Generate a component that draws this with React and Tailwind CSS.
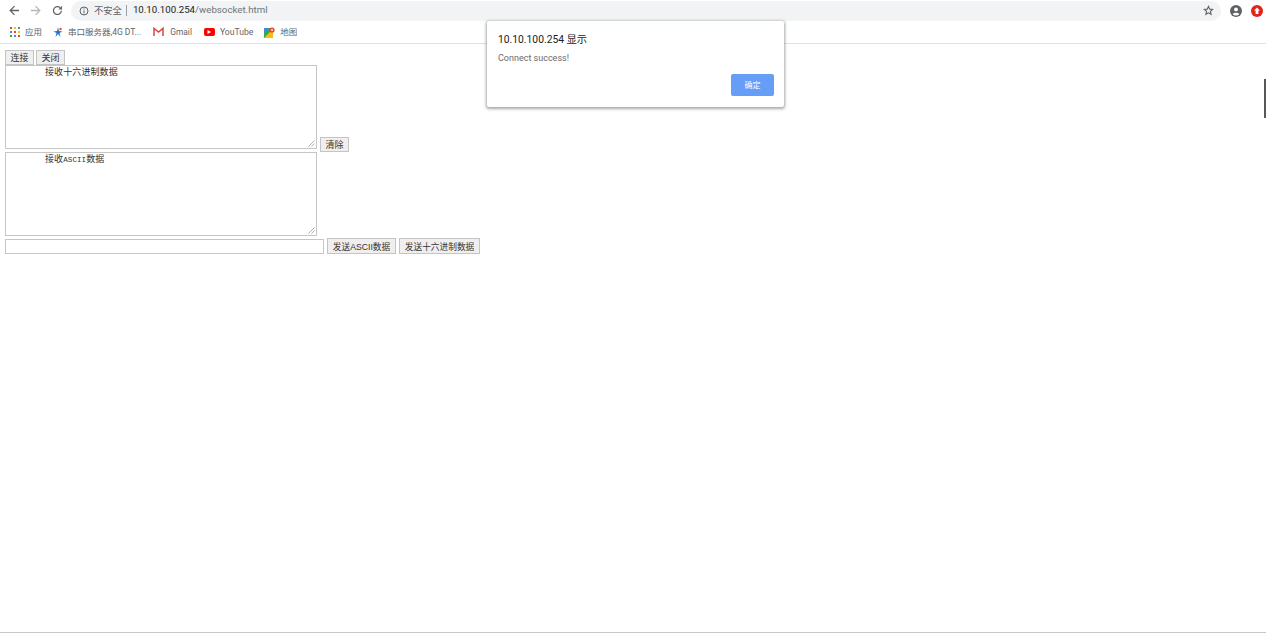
import React from "react";

const ui = { fontFamily: '"Roboto","Noto Sans CJK SC",sans-serif' };
const pageFont = { fontFamily: '"Liberation Sans","Noto Sans CJK SC",sans-serif' };
const mono = { fontFamily: '"Liberation Mono","Noto Sans CJK SC",monospace' };

function Btn({ children, className = "" }) {
  return (
    <button
      style={pageFont}
      className={`h-[15px] pt-[1px] border border-[#c4c4c4] bg-[#efefef] leading-[12px] text-[#333] whitespace-nowrap shrink-0 ${className}`}
    >
      {children}
    </button>
  );
}

function Grip() {
  return (
    <svg className="absolute right-[1px] bottom-[1px]" width="7" height="7" viewBox="0 0 7 7">
      <path d="M0.5 6.5 L6.5 0.5 M3.5 6.5 L6.5 3.5" stroke="#9a9a9a" strokeWidth="0.8" fill="none" />
    </svg>
  );
}

function Box({ children }) {
  return (
    <div className="relative w-[312px] h-[84px] border border-[#c6c6c6] bg-white shrink-0">
      <div style={mono} className="pl-[39px] pt-[1px] text-[9px] leading-[12px] text-[#333] tracking-[0.1px]">
        {children}
      </div>
      <Grip />
    </div>
  );
}

function Bookmark({ icon, label, className = "", textClass = "text-[8.5px]" }) {
  return (
    <div className={`flex items-center gap-[5px] ${className}`}>
      <span className="w-[11px] h-[11px] flex items-center justify-center shrink-0">{icon}</span>
      <span className={`${textClass} text-[#5f6368] whitespace-nowrap`}>{label}</span>
    </div>
  );
}

export default function App() {
  const dots = ["#ea4335", "#fbbc04", "#34a853", "#4285f4", "#ea4335", "#fbbc04", "#34a853", "#4285f4", "#ea4335"];
  return (
    <div style={ui} className="relative w-[1266px] h-[633px] bg-white overflow-hidden flex flex-col">
      <header className="h-[44px] shrink-0 border-b border-[#e0e0e0] flex flex-col bg-white">
        <div className="h-[21px] flex items-center pl-[9px] pr-[3px] shrink-0">
          <svg width="11" height="11" viewBox="0 0 12 12" fill="none" stroke="#5f6368" strokeWidth="1.4">
            <path d="M11 6H1.5M6 1.2 1.3 6 6 10.8" />
          </svg>
          <svg className="ml-[10px]" width="11" height="11" viewBox="0 0 12 12" fill="none" stroke="#b5b7ba" strokeWidth="1.4">
            <path d="M1 6h9.5M6 1.2 10.7 6 6 10.8" />
          </svg>
          <svg className="ml-[11px]" width="11" height="11" viewBox="0 0 12 12" fill="none" stroke="#5f6368" strokeWidth="1.4">
            <path d="M10.2 6.2A4.3 4.3 0 1 1 8.9 2.9" />
            <path d="M11 0.8V4.8H7z" fill="#5f6368" stroke="none" />
          </svg>
          <div className="ml-[8px] flex-1 h-[20px] rounded-full bg-[#f1f3f4] flex items-center pl-[8px] pr-[7px]">
            <svg width="10" height="10" viewBox="0 0 10 10" fill="none" stroke="#5f6368" strokeWidth="1">
              <circle cx="5" cy="5" r="4" />
              <path d="M5 4.4v3M5 2.4v1" />
            </svg>
            <span className="ml-[5px] text-[9.3px] text-[#5f6368]">不安全</span>
            <span className="ml-[4px] w-px h-[11px] bg-[#9aa0a6]" />
            <span className="ml-[6px] text-[9.7px] text-[#202124]">10.10.100.254</span>
            <span className="text-[9.7px] text-[#70757a]">/websocket.html</span>
            <svg className="ml-auto" width="11" height="11" viewBox="0 0 24 24" fill="none" stroke="#5f6368" strokeWidth="2.4">
              <path d="M12 3l2.7 6 6.3.6-4.8 4.3 1.4 6.4L12 17l-5.6 3.3 1.4-6.4L3 9.6 9.3 9z" />
            </svg>
          </div>
          <svg className="ml-[9px]" width="12" height="12" viewBox="0 0 12 12">
            <circle cx="6" cy="6" r="6" fill="#5f6368" />
            <circle cx="6" cy="4.4" r="1.9" fill="#fff" />
            <path d="M2.6 9a4.2 3 0 0 1 6.8 0 4.4 4.4 0 0 1-6.8 0z" fill="#fff" />
          </svg>
          <svg className="ml-[9px]" width="12" height="12" viewBox="0 0 12 12">
            <circle cx="6" cy="6" r="6" fill="#e2231a" />
            <path d="M6 2.4 9 5.6H7.4V9H4.6V5.6H3z" fill="#fff" />
          </svg>
        </div>
        <div className="h-[22px] flex items-center pl-[9px]">
          <Bookmark
            label="应用"
            icon={
              <span className="grid grid-cols-3 gap-[2px]">
                {dots.map((c, i) => (
                  <span key={i} className="w-[2px] h-[2px]" style={{ backgroundColor: c }} />
                ))}
              </span>
            }
          />
          <Bookmark
            className="ml-[10px]"
            label="串口服务器,4G DT..."
            icon={
              <svg width="10" height="11" viewBox="0 0 10 11">
                <path d="M5 0.5 6 4 9.5 4.5 6.5 6 7.5 10 5 7 2.5 10 3.5 6 .5 4.5 4 4z" fill="#2a6fc9" />
                <circle cx="7.5" cy="2" r="1.2" fill="#e8502f" />
              </svg>
            }
          />
          <Bookmark
            className="ml-[12px]"
            label="Gmail"
            textClass="text-[8.4px] ml-[1px]"
            icon={
              <svg width="11" height="9" viewBox="0 0 11 9" fill="none" stroke="#d9483b" strokeWidth="1.5">
                <path d="M1 9V1.4l4.5 3.7L10 1.4V9" />
              </svg>
            }
          />
          <Bookmark
            className="ml-[12px]"
            label="YouTube"
            textClass="text-[8.6px]"
            icon={
              <span className="w-[11px] h-[8px] rounded-[2px] bg-[#f00] flex items-center justify-center">
                <svg width="4" height="4" viewBox="0 0 4 4">
                  <path d="M0.5 0 4 2 .5 4z" fill="#fff" />
                </svg>
              </span>
            }
          />
          <Bookmark
            className="ml-[11px]"
            label="地图"
            icon={
              <svg width="11" height="11" viewBox="0 0 11 11">
                <rect y="1" width="9" height="10" fill="#34a853" />
                <path d="M0 11 9 2v9z" fill="#fbbc04" />
                <path d="M0 1h5L0 6z" fill="#4285f4" />
                <circle cx="8" cy="3" r="2.6" fill="#ea4335" />
                <circle cx="8" cy="3" r="0.9" fill="#fff" />
              </svg>
            }
          />
        </div>
      </header>

      <main className="flex-1 pl-[5px] pt-[6px] flex flex-col items-start border-b border-[#c8c8c8]">
        <div className="flex gap-[2px]">
          <Btn className="border-[#9a9a9a] text-[9px] w-[29px]">连接</Btn>
          <Btn className="text-[9px] w-[29px]">关闭</Btn>
        </div>
        <div className="flex items-end gap-[3px]">
          <Box>接收十六进制数据</Box>
          <Btn className="-mb-[3px] text-[9px] w-[29px]">清除</Btn>
        </div>
        <div className="mt-[3px]">
          <Box>
            接收<span className="text-[7.5px]">ASCII</span>数据
          </Box>
        </div>
        <div className="mt-[2px] flex items-center gap-[3px]">
          <div className="w-[319px] h-[15px] border border-[#c6c6c6] bg-white" />
          <Btn className="h-[16px] w-[69px] text-[8.7px]">发送ASCII数据</Btn>
          <Btn className="h-[16px] w-[81px] text-[8.7px]">发送十六进制数据</Btn>
        </div>
      </main>

      <div className="absolute right-0 top-[79px] w-[2px] h-[39px] bg-[#55585c]" />

      <div className="absolute left-[487px] top-[21px] w-[297px] h-[86px] bg-white rounded-[2px] shadow-[0_1px_3px_1px_rgba(60,64,67,0.45)] flex flex-col pl-[11px] pr-[10px]">
        <div className="mt-[11px] text-[10.3px] leading-[14px] text-[#202124] pt-[1px]">10.10.100.254 显示</div>
        <div className="mt-[5px] text-[9px] leading-[12px] text-[#70696a]">Connect success!</div>
        <div className="mt-auto mb-[11px] flex justify-end">
          <div className="w-[43px] h-[22px] pt-[2px] rounded-[2px] bg-[#669df6] text-white text-[8px] flex items-center justify-center">确定</div>
        </div>
      </div>
    </div>
  );
}
